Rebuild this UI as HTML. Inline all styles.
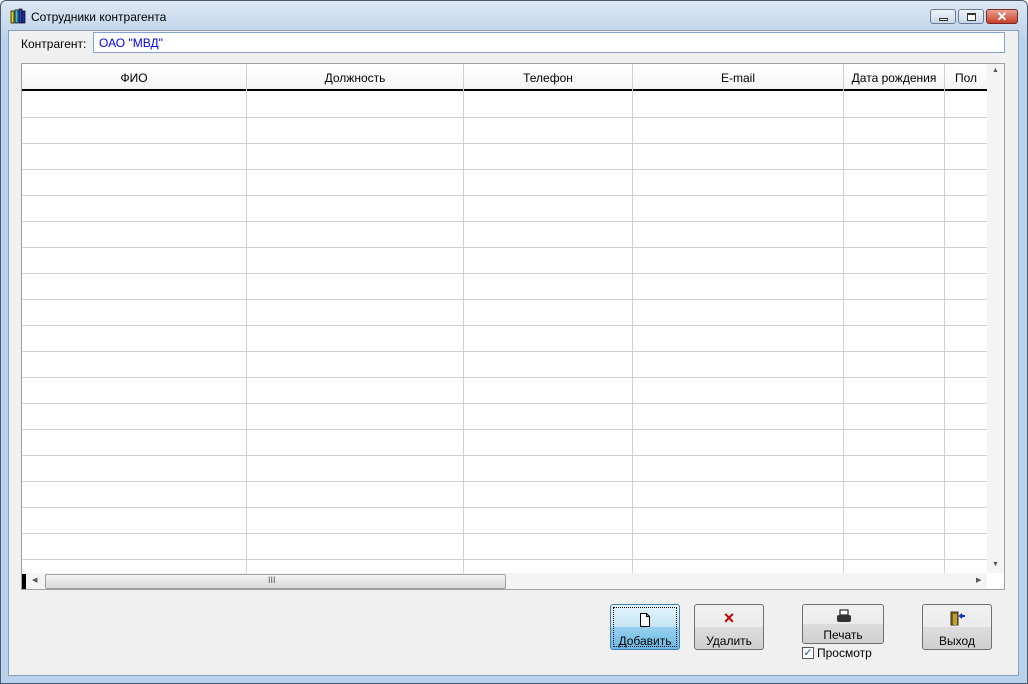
<!DOCTYPE html><html><head><meta charset="utf-8"><style>
*{margin:0;padding:0;box-sizing:border-box}
body{width:1028px;height:684px;background:#fff;font-family:"Liberation Sans",sans-serif;font-size:12px;position:relative;overflow:hidden}
.a{position:absolute}
.btn{position:absolute;border:1px solid #707070;border-radius:3px;background:linear-gradient(#f2f2f2 0,#ebebeb 50%,#dddddd 50%,#cfcfcf 100%);text-align:center;font-size:12px;color:#000}
</style></head><body>
<div class="a" style="left:0;top:0;width:1028px;height:684px;background:linear-gradient(#dbe7f4,#c4d7ec 30px,#b9d1ea 40px);border:1px solid #4a5a6e;border-radius:6px 6px 0 0"></div>
<div class="a" style="left:10px;top:8px;width:16px;height:16px">
<svg width="16" height="16"><rect x="1" y="3" width="3" height="12" fill="#e8d000" stroke="#000" stroke-width=".7"/><rect x="5" y="2" width="3" height="13" fill="#30c0e0" stroke="#000" stroke-width=".7"/><rect x="9" y="1" width="3" height="14" fill="#3040c0" stroke="#000" stroke-width=".7"/><rect x="12" y="3" width="3" height="12" fill="#2030a0" stroke="#000" stroke-width=".7"/></svg></div>
<div class="a" style="left:31px;top:10px;font-size:12px">Сотрудники контрагента</div>
<div class="a" style="left:930px;top:9px;width:26px;height:15px;border:1px solid #6a7a90;border-radius:3px;background:linear-gradient(#eef3fa,#c9d8ea)"><div class="a" style="left:8px;top:8px;width:9px;height:3px;border:1px solid #333;background:#fff"></div></div>
<div class="a" style="left:958px;top:9px;width:26px;height:15px;border:1px solid #6a7a90;border-radius:3px;background:linear-gradient(#eef3fa,#c9d8ea)"><div class="a" style="left:8px;top:3px;width:9px;height:8px;border:1px solid #333;border-top-width:2px;background:#fff"></div></div>
<div class="a" style="left:986px;top:9px;width:32px;height:15px;border:1px solid #7a2a20;border-radius:3px;background:linear-gradient(#e8a090,#c8402c);color:#fff;font-weight:bold;font-size:13px;text-align:center;line-height:13px">✕</div>
<div class="a" style="left:8px;top:30px;width:1011px;height:646px;background:#f0f0f0;border:1px solid #8aa0b8"></div>
<div class="a" style="left:21px;top:37px">Контрагент:</div>
<div class="a" style="left:93px;top:32px;width:912px;height:21px;background:#fff;border:1px solid #7ea4cf;color:#0000e0;padding:3px 0 0 5px">ОАО "МВД"</div>
<div class="a" style="left:21px;top:63px;width:984px;height:527px;background:#fff;border:1px solid #a0a0a0"></div>
<div class="a" style="left:22px;top:64px;width:965px;height:27px;background:linear-gradient(#fff,#f4f4f4);border-bottom:2px solid #000"></div>
<svg class="a" style="left:22px;top:64px" width="965" height="509">
<g stroke="#d0d0d0" stroke-width="1">
<line x1="224.5" y1="0" x2="224.5" y2="509"/><line x1="441.5" y1="0" x2="441.5" y2="509"/><line x1="610.5" y1="0" x2="610.5" y2="509"/><line x1="821.5" y1="0" x2="821.5" y2="509"/><line x1="922.5" y1="0" x2="922.5" y2="509"/>
<line x1="0" y1="53.5" x2="965" y2="53.5"/><line x1="0" y1="79.5" x2="965" y2="79.5"/><line x1="0" y1="105.5" x2="965" y2="105.5"/><line x1="0" y1="131.5" x2="965" y2="131.5"/><line x1="0" y1="157.5" x2="965" y2="157.5"/><line x1="0" y1="183.5" x2="965" y2="183.5"/><line x1="0" y1="209.5" x2="965" y2="209.5"/><line x1="0" y1="235.5" x2="965" y2="235.5"/><line x1="0" y1="261.5" x2="965" y2="261.5"/><line x1="0" y1="287.5" x2="965" y2="287.5"/><line x1="0" y1="313.5" x2="965" y2="313.5"/><line x1="0" y1="339.5" x2="965" y2="339.5"/><line x1="0" y1="365.5" x2="965" y2="365.5"/><line x1="0" y1="391.5" x2="965" y2="391.5"/><line x1="0" y1="417.5" x2="965" y2="417.5"/><line x1="0" y1="443.5" x2="965" y2="443.5"/><line x1="0" y1="469.5" x2="965" y2="469.5"/><line x1="0" y1="495.5" x2="965" y2="495.5"/>
</g></svg>
<div class="a" style="left:22px;top:71px;width:224px;text-align:center">ФИО</div>
<div class="a" style="left:247px;top:71px;width:216px;text-align:center">Должность</div>
<div class="a" style="left:464px;top:71px;width:168px;text-align:center">Телефон</div>
<div class="a" style="left:633px;top:71px;width:210px;text-align:center">E-mail</div>
<div class="a" style="left:844px;top:71px;width:100px;text-align:center">Дата рождения</div>
<div class="a" style="left:945px;top:71px;width:42px;text-align:center">Пол</div>
<div class="a" style="left:987px;top:64px;width:17px;height:509px;background:#f4f4f4"></div>
<div class="a" style="left:992px;top:67px;font-size:7px;color:#555">▲</div>
<div class="a" style="left:992px;top:561px;font-size:7px;color:#555">▼</div>
<div class="a" style="left:22px;top:573px;width:965px;height:16px;background:#f4f4f4"></div>
<div class="a" style="left:22px;top:574px;width:4px;height:15px;background:#000"></div>
<div class="a" style="left:32px;top:576px;font-size:7px;color:#555">◀</div>
<div class="a" style="left:976px;top:576px;font-size:7px;color:#555">▶</div>
<div class="a" style="left:45px;top:574px;width:461px;height:15px;border:1px solid #a0a0a0;border-radius:2px;background:linear-gradient(#f4f4f4,#d8d8d8)"><span class="a" style="left:222px;top:0;font-size:9px;color:#555">III</span></div>
<div class="btn" style="left:610px;top:604px;width:70px;height:46px;border-color:#3c7fb1;background:linear-gradient(#e5f4fc 0,#c4e5f6 50%,#98d1ef 50%,#6ab8e4 100%)">
<div class="a" style="left:2px;top:2px;right:2px;bottom:2px;border:1px dotted #000"></div>
<svg class="a" style="left:28px;top:8px" width="12" height="14"><path d="M1.5 .5h6l3 3v10h-9z M7.5 .5v3h3" fill="#fff" stroke="#000"/></svg>
<div class="a" style="left:0;right:0;top:29px">Добавить</div></div>
<div class="btn" style="left:694px;top:604px;width:70px;height:46px"><div class="a" style="left:0;right:0;top:3px;color:#c00000;font-size:18px;font-weight:bold">×</div><div class="a" style="left:0;right:0;top:29px">Удалить</div></div>
<div class="btn" style="left:802px;top:604px;width:82px;height:40px">
<svg class="a" style="left:33px;top:4px" width="16" height="15"><rect x="4" y="1" width="8" height="5" fill="#fff" stroke="#000"/><rect x="1" y="6" width="14" height="7" rx="2" fill="#333"/></svg>
<div class="a" style="left:0;right:0;top:23px">Печать</div></div>
<div class="a" style="left:802px;top:647px;width:12px;height:12px;border:1px solid #555;background:#fff;font-size:11px;line-height:10px;color:#2a4a9a;text-align:center">✓</div>
<div class="a" style="left:817px;top:646px">Просмотр</div>
<div class="btn" style="left:922px;top:604px;width:70px;height:46px">
<svg class="a" style="left:27px;top:6px" width="16" height="16"><rect x="1" y="1" width="7" height="13" fill="#806000" stroke="#333"/><rect x="3" y="3" width="4" height="11" fill="#c0a030"/><path d="M10 5h5M12 3l-2 2 2 2" stroke="#1030c0" stroke-width="2" fill="none"/></svg>
<div class="a" style="left:0;right:0;top:29px">Выход</div></div>
</body></html>
